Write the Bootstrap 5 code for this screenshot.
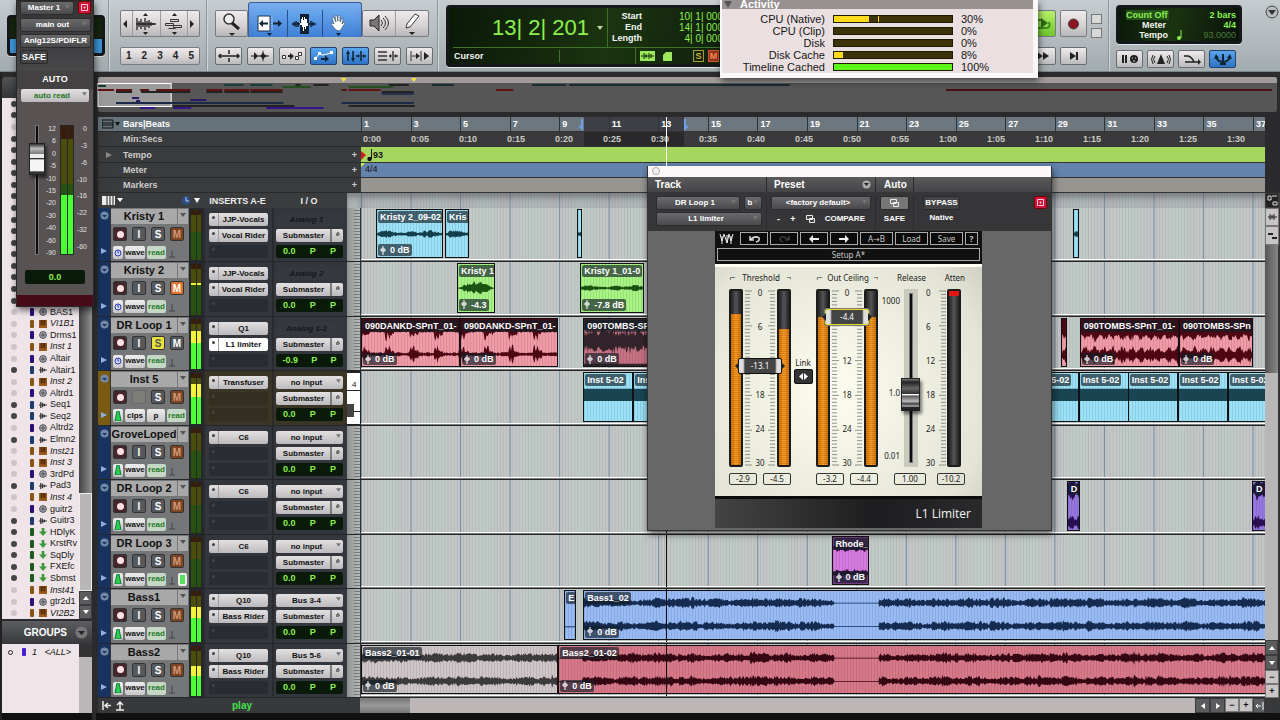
<!DOCTYPE html>
<html lang="en">
<head>
<meta charset="utf-8">
<meta name="viewport" content="width=device-width, initial-scale=1">
<title>Edit: Session</title>
<link href="https://cdn.jsdelivr.net/npm/bootstrap@5.3.0/dist/css/bootstrap.min.css" rel="stylesheet">
<style>
:root{--ui:"Liberation Sans",Arial,sans-serif;--plug:"Noto Sans","DejaVu Sans",sans-serif;--lcd:#8df04e;--arrow:url("data:image/svg+xml,%3Csvg xmlns='http://www.w3.org/2000/svg' viewBox='0 0 6 4'%3E%3Cpath d='M0 0h6L3 4z' fill='%23777'/%3E%3C/svg%3E")}
*{box-sizing:border-box}
body{font:9px/12px var(--ui);background:#2b2b2d;color:#ddd;height:100vh;min-height:600px;overflow:hidden;position:relative}
button,select,input,output{font-family:var(--ui)}
button{padding:0;border:0;line-height:1}
svg{display:block}
/* toolbar */
.toolbar-top{height:72px;background:linear-gradient(#c6ccd0,#b4bcc0 50%,#a2abae);border-bottom:1px solid #7d8588}
.tb-sec{border-right:1px solid #8b9497;box-shadow:1px 0 #d2d8da;padding:10px 11px 0}
.tool-strip{border:1px solid #777c80;border-radius:2px;background:linear-gradient(#efeaec,#d5d0d2 60%,#b7b6b9);height:27px}
.tool-strip>button{background:none;border-right:1px solid #9a9c9f;flex:1}
.tool-strip>button:last-child{border:0}
.tool-strip>.on{background:linear-gradient(#69a7ee,#3f7fd6);border-color:#264f8c}
.num-strip,.mini-strip{margin-top:10px}
.num-strip{height:18px}
.num-strip>button{font-size:10px;font-weight:bold;color:#222;border:0}
.tool-row{height:27px}
.smart{background:linear-gradient(#79aeef,#3f7cd0);border:1px solid #3b5e92;border-bottom:0;border-radius:3px 3px 0 0;margin-top:-8px;padding:7px 5px 0;width:115px;height:35px}
.mini{width:27px;height:18px;border:1px solid #686d70;border-radius:2px;background:linear-gradient(#eeeaeb,#bcbbbe);display:grid;place-items:center}
.mini.on{background:linear-gradient(#58a5ee,#2f73c4);border-color:#21416e}
.lcd{background:linear-gradient(100deg,#0b1808,#1b3410 45%,#08120a);border:3px solid #15171a;border-radius:4px;box-shadow:0 1px #dfe5e8;color:var(--lcd)}
.counter-main{font-size:22px;line-height:24px;color:var(--lcd)}
.gline{border-color:#3e7427!important}
.white{color:#f2f5f2}
/* universe */
.universe{margin:5px 3px 0 2px;height:35px;background:#565656;border-top:6px solid #a09b99;border-radius:2px;position:relative}
.universe svg{width:100%;height:29px;overflow:visible}
/* sidebar */
.side{width:92px;border-left:2px solid #222;padding-top:5px}
.list-head{height:21px;background:linear-gradient(#505254,#343638);border-radius:4px 4px 0 0}
.trk-list{background:#efe5e8;width:77px;min-height:0;overflow:hidden}
.trk-list li{flex:1;min-height:0;display:flex;align-items:center;font-size:9px;line-height:11px;white-space:nowrap;color:#151515}
.dot{width:6px;height:6px;border-radius:50%;background:#444;margin-left:9px;margin-right:13px;flex:none}
.dot.off{background:#cfc5c9}
.chip{width:4px;height:8px;border-radius:1px;margin-right:6px;flex:none}
.trk-list .chip{margin-right:5px}
.li-ic{width:8px;height:8px;margin-right:3px;flex:none}
.sbar{width:13px;background:linear-gradient(90deg,#444,#909090)}
.sbar i{display:block;background:#b9b6b7;border:1px solid #eee}
.sbar button,.nav-btn{background:#5b5c5e;color:#fff;border:1px solid #3c3c3e;display:grid;place-items:center}
.groups-head{height:23px;background:linear-gradient(#5b5d60,#36383b);color:#fff;font:bold 10px/12px var(--ui);margin-top:2px}
.groups-list{height:69px;background:#efe5e8;color:#111}
/* rulers */
.rulers{height:76px;margin-top:5px;margin-left:2px}
.ruler-labels{width:263px;background:#3a3b3c}
.ruler-labels>div{flex:1;border-bottom:1px solid #292a2b;display:flex;align-items:center;font-weight:bold;color:#ccc;padding-left:25px}
.ruler-labels>div:first-child{background:#67737b;color:#fff;padding-left:0}
.ruler-row{flex:1;position:relative;overflow:hidden;border-bottom:1px solid #333}
.ruler-row span{position:absolute;top:0;line-height:15px;font-weight:bold;white-space:nowrap}
.bars-row{background:linear-gradient(90deg,#6c777f 24.7%,#3d4046 24.7% 35.7%,#6c777f 35.7%)}
.bars-row span{border-left:1px solid #2e3338;padding-left:2px;color:#fff}
.secs-row{background:linear-gradient(90deg,#3a3a3c 24.7%,#29292b 24.7% 35.7%,#3a3a3c 35.7%)}
.secs-row span{color:#c9c9c9;padding-left:2px}
.ruler-area{position:relative}
.ruler-area::after{content:"";position:absolute;left:33.7%;top:0;height:100%;width:1px;background:#fff}
/* tracks */
.edit-head{height:15px;margin-left:2px;background:#3a3c3e;color:#eee;font-weight:bold}
.gut{background-color:#aeb3b5;box-shadow:inset 0 5px 5px rgba(60,65,70,.4)}
.grid-bg{background-image:linear-gradient(90deg,#6f90a3 1px,transparent 1px),linear-gradient(90deg,rgba(130,130,150,.25) 1px,transparent 1px),linear-gradient(90deg,rgba(195,165,190,.14),rgba(175,215,195,.16) 50%,rgba(195,165,190,.14));background-size:calc(100%/18.25) 100%,calc(100%/292) 100%,calc(100%/18.25) 100%}
.tracks{flex:1;min-width:0;min-height:486px;margin-left:2px}
.trk{flex:1;min-height:54px;background:#33363c;border-bottom:1px solid #24262a}
.trk.amber{background:#3a3525}
.strip{width:12px;background:#17335f;padding:3px 0}
.amber .strip{background:#7a5a10}
.panel{width:79px;background:#747678;border-left:1px solid #333;padding:1px 1px 0 0}
.nm{height:15px;background:#a9a9a9;color:#111;font:bold 11px/15px var(--ui);text-align:center;white-space:nowrap}
.nm span{border-right:1px solid #777;width:67px}
.row-b{padding:3px 4px 0 2px;display:flex;justify-content:space-between}
.sq{width:14px;height:14px;border-radius:2px;font:bold 10px/13px var(--ui);background:#55585c;color:#fff;border:1px solid #333;text-align:center}
.sq.rec{background:#44272c;display:grid;place-items:center}
.sq.rec::after{content:"";width:7px;height:7px;border-radius:50%;background:#ffe1e4}
.sq.mute{background:#7d4423;color:#d19a7c}
.sq.mute-on{background:#e07432}
.sq.solo-on{background:#e8e23c;color:#555}
.sq.none{background:#7d7d78;border-color:#6a6a68}
.row-c{padding:5px 0 0 2px;gap:2px;display:flex}
.tiny{height:13px;border-radius:2px;background:linear-gradient(#eee,#c6c6c8);color:#111;font:bold 8px/12px var(--ui);text-align:center}
.tiny.rd{background:#c5d8c5;color:#267a26;width:19px}
.meter{width:14px;padding:2px 2px 1px;gap:1px;background:#24282a;display:flex}
.meter i{flex:1;background:linear-gradient(#381d0b 10%,#4d4d0b 10% 45%,#28520f 45%);display:flex;align-items:flex-end}
.meter b{display:block;width:100%;background:#4aff34}
.ins{width:69px;padding:5px 4px 0 4px;border-left:2px solid #292b2f}
.slot{height:13px;margin-bottom:3px;background:#292c32;border-radius:2px;display:flex;width:100%;font:bold 8px/13px var(--ui);color:#111}
.amber .slot.empty{background:#332e1f}
.slot::before{content:"";width:3px;height:3px;border-radius:50%;background:#444;margin:3px 3px 0 3px}
.slot.full{background:linear-gradient(#e3e0e1,#bcbabd)}
.slot.full.lit{background:#fff}
.slot span{flex:1;border-left:1px solid #9d9b9e;text-align:center;white-space:nowrap}
.slot.empty span{border:0}
.io{width:75px;padding:5px 4px 0 2px;border-left:2px solid #292b2f}
.form-select.dd{height:13px;min-height:0;padding:0 8px 0 2px;margin:0 0 3px;border:0;border-radius:2px;background:var(--arrow) right 2px top 3px/5px 4px no-repeat,linear-gradient(#e3e0e1,#bcbabd);font:bold 8px/13px var(--ui);color:#111;text-align:center;text-align-last:center;box-shadow:none}
.form-select.dd.off{background:#35393f;color:#15171a;font-style:italic}
.form-select.dd.dark{background:var(--arrow) right 3px top 3px/5px 4px no-repeat,linear-gradient(#6a6a6c,#4a4a4c);color:#fff;border:1px solid #2c2c2e;height:14px;line-height:12px;margin-bottom:2px}
.form-select.dd.subm{background:linear-gradient(90deg,transparent 80%,rgba(90,90,90,.7) 80% 83%,transparent 83%),radial-gradient(circle 2px at 92% 40%,#777 99%,transparent),linear-gradient(#e3e0e1,#bcbabd);padding-right:14px}
.vol{height:13px;background:#0a1a0a;border-radius:2px;color:var(--lcd);font:bold 9px/13px var(--ui);display:flex;justify-content:space-around}
.vruler{width:14px;background:repeating-linear-gradient(transparent 0 2px,#77797a 2px 3px) right/6px 100% no-repeat,linear-gradient(90deg,#8f9192,#b9bbba);border-right:1px solid #333}
.keys{width:14px;background:#fff;color:#111;position:relative;border:solid #222;border-width:2px 1px 1px 0;padding:7px 0 0 5px;font:8px/10px var(--ui)}
.keys::after{content:"";position:absolute;left:0;top:31px;width:7px;height:13px;background:#444}
.keys::before{content:"";position:absolute;left:0;top:17px;width:100%;height:22px;border:solid #222;border-width:1px 0}
.lane{flex:1;min-width:0;position:relative;overflow:hidden;background-color:#c4cac7;border-bottom:1px solid #7a7d7c;box-shadow:inset 0 -1px #fff}
.lane::after{content:"";position:absolute;left:33.7%;top:0;bottom:0;width:1px;background:#111}
.clip{position:absolute;top:1px;bottom:2px;border:1px solid #111;overflow:hidden}
.clip>svg{position:absolute;left:0;top:0;width:100%;height:100%}
.clip-nm,.clip-db{position:absolute;left:1px;font:bold 9px/12px var(--ui);color:#fff;background:rgba(20,30,40,.66);border-radius:2px;padding:0 2px;white-space:nowrap}
.clip-nm{top:1px}.clip-db{bottom:1px;padding-left:1px}
.clip::before{content:"";position:absolute;inset:0;background:repeating-linear-gradient(90deg,rgba(0,0,0,.09) 0 1px,transparent 1px 3px)}
.vscroll{width:15px;background:#b9b6b7;border-right:2px solid #333}
.footbar{height:15px;margin-left:2px;background:#38393b}
.hscroll{flex:1;background:#bcb6b7}
.pm{width:14px;height:14px;display:grid;place-items:center;background:#c9c5c7;color:#111;border:1px solid #777}
/* floating windows */
.win{position:absolute;box-shadow:1px 3px 7px rgba(0,0,0,.6)}
.master{left:16px;top:0;width:78px;height:307px;background:#585253;border:1px solid #29292b}
.master-top{background:linear-gradient(#333,#47474a);padding:0 2px 0 3px;height:70px}
.dark-btn{background:#434345;border:1px solid #29292b;border-radius:2px;color:#fff;font:bold 9px/12px var(--ui);padding:0 1px}
.target{width:13px;height:13px;background:#d1153a;border:1px solid #700;border-radius:2px;display:grid;place-items:center}
.vslide{position:relative;flex:none}
.vslide input{appearance:none;-webkit-appearance:none;position:absolute;left:50%;top:50%;transform:translate(-50%,-50%) rotate(-90deg);background:none;margin:0}
.vslide input::-webkit-slider-runnable-track{height:4px;background:#0d0d0f;border:1px solid #777;box-sizing:border-box}
.vslide input::-webkit-slider-thumb{-webkit-appearance:none;margin-top:-7px;border:1px solid #222;box-shadow:-3px 2px 3px rgba(0,0,0,.5)}
.v-master{width:16px;height:130px}.v-master input{width:130px;height:16px}
.v-master input::-webkit-slider-thumb{width:32px;height:16px;background:linear-gradient(90deg,#333 8%,#f5f5f5 9% 48%,#333 49% 53%,#eee 54% 65%,#777 66%,#bbb 85%,#333)}
.v-rel{width:14px;height:178px;background:#c9c9bd}.v-rel input{width:170px;height:20px}
.v-rel input::-webkit-slider-thumb{width:33px;height:19px;margin-top:-9px;background:linear-gradient(90deg,#222 8%,#aaa 12%,#444 20%,#bbb 28%,#555 46%,#fff 48% 51%,#333 53%,#666 70%,#222 90%,#777)}
.sc{font:7px/8px var(--ui);color:#e3e0e0;text-align:right;display:flex;flex-direction:column;justify-content:space-between}
.activity{left:720px;top:0;width:318px;height:78px;background:#ebe0e1;border:solid #fbf6f7;border-width:0 5px 5px 2px;color:#151515}
.act-head{height:9px;background:#989192;color:#fff;font:bold 11px/9px var(--ui);padding-left:2px}
.act-rows{height:60px;padding-top:4px;font-size:11px}
.act-rows>div{flex:1}
.act-rows .progress{width:120px;height:8px;border:1px solid #1f1a05;border-radius:0;background:#3d330b}
.plugin{left:647px;top:166px;width:405px;height:365px;background:#676767;border:1px solid #333;border-top:0}
.plug-title{height:11px;background:#fcf8fa;padding:1px 4px}
.plug-title button{width:8px;height:8px;border:1px solid #aaa;border-radius:50%;background:#f4f0f2;display:block}
.plug-head{height:15px;background:linear-gradient(#5b5b5d,#444446);color:#fff;font:bold 10px/15px var(--ui)}
.plug-ctl{height:39px;background:#363638;padding:4px 0 0;color:#fff}
.plug-ctl>div,.plug-head>div{border-right:1px solid #2b2b2d}
.flat{background:none;color:#fff;font:bold 9px/12px var(--ui);height:13px;padding:0 2px}
.l1{width:267px;margin-left:67px;background:#111;color:#222}
.l1-bar{height:16px;padding:1px;gap:2px}
.l1-bar button{border:1px solid #aaa;background:#0b0b0b;color:#c8c8c8;font:8px/10px var(--plug);height:13px;display:grid;place-items:center;padding:0}
.l1-setup{height:13px;margin:1px 2px 3px;border:1px solid #aaa;color:#c8c8c8;font:8px/11px var(--plug);text-align:center}
.l1-face{height:232px;background:radial-gradient(circle at 45% 55%,#fdfdf0,#e3e4d5 80%,#d0d0c4);border-top:3px solid #fffff5;padding:4px 0 0 14px;font:8px/12px var(--plug)}
.grp{width:62px;margin-right:2px}
.grp-t{height:18px;line-height:13px;text-align:center;white-space:nowrap}
.lv{width:14px;height:178px;background:linear-gradient(90deg,#222,#555 50%,#222);border:2px solid #1c1c1c;border-radius:2px;display:flex;align-items:flex-end}
.lv i{display:block;width:100%;background:repeating-linear-gradient(rgba(120,60,0,.25) 0 1px,transparent 1px 2px),linear-gradient(90deg,#d27408,#ff9f27 50%,#d27408)}
.scale{flex:1;position:relative;height:178px}
.scale svg{position:absolute;inset:0;width:100%;height:100%}
.nums{height:178px;display:flex;flex-direction:column;justify-content:space-between;text-align:center;line-height:8px}
.ro-row{margin-top:6px}
.ro{border:1px solid #333;border-radius:2px;height:12px;line-height:10px;text-align:center;width:28px;display:block;font-family:var(--plug)}
.grip{position:absolute;left:9px;width:44px;height:16px;border:1px solid #111;border-radius:2px;background:linear-gradient(90deg,#ddd 10%,#444 14% 86%,#ddd 90%);color:#fff;text-align:center;font:8px/13px var(--plug)}
.grip::before,.grip::after{content:"";position:absolute;top:3px;border:4px solid transparent}
.grip::before{left:-8px;border-right-color:#222}.grip::after{right:-8px;border-left-color:#222}
.grip.sel{border:1px solid #e4dc1d;box-shadow:0 0 0 1px #777}
.grp .hid{position:absolute;opacity:0;left:9px;top:0;width:44px;height:100%}
.l1-foot{height:32px;background:linear-gradient(90deg,#444,#1d1d1f 60%,#2a2a2c);border-top:3px solid #0c0c0c;color:#f4f4f4;font:500 12px/30px "Open Sans",var(--plug);text-align:right;padding-right:11px}
</style>
</head>
<body class="d-flex flex-column">

<header class="toolbar-top d-flex flex-shrink-0">
  <div class="tb-sec flex-shrink-0" style="width:109px;padding:15px 3px 0 7px"><div class="lcd" style="height:41px;background:linear-gradient(#14240f 60%,#3c93d8 60%)"></div></div>
  <div class="tb-sec flex-shrink-0" style="width:98px;padding-right:6px">
    <div class="tool-strip d-flex">
      <button aria-label="Zoom out"><svg width="8" height="12" viewBox="0 0 8 12"><path d="M6 2v8L2 6z" fill="#222"/></svg></button>
      <button aria-label="Audio zoom" style="flex:2.4"><svg width="26" height="24" viewBox="0 0 26 24"><path d="M10 4h5l-2.500-3zM10 20h5l-2.500 3z" fill="#222"/><path d="M4 6v12M6 9v6M8 7v10M10 10v5M12 6v12M14 9v6M16 8v8M18 10v4M20 11v2M3 12h20" stroke="#222" stroke-width="1.300"/></svg></button>
      <button aria-label="MIDI zoom" style="flex:2.4"><svg width="26" height="24" viewBox="0 0 26 24"><path d="M11 4h5l-2.500-3zM11 20h5l-2.500 3z" fill="#222"/><path d="M9.500 7.500h8v2h-8zM4.500 11.500h8v2h-8zM12.500 13.500h8v2h-8zM7.500 16.500h7" fill="none" stroke="#333"/></svg></button>
      <button aria-label="Zoom in"><svg width="8" height="12" viewBox="0 0 8 12"><path d="M2 2v8l4-4z" fill="#222"/></svg></button>
    </div>
    <div class="tool-strip num-strip d-flex"><button>1</button><button>2</button><button>3</button><button>4</button><button>5</button></div>
  </div>
  <div class="tb-sec flex-shrink-0" style="width:231px;padding-left:8px;padding-right:8px">
    <div class="tool-row d-flex">
      <div class="tool-strip d-flex" style="width:33px"><button aria-label="Zoomer"><svg width="30" height="25" viewBox="0 0 30 25"><circle cx="13" cy="8" r="5" fill="#eee" stroke="#333" stroke-width="1.500"/><path d="m16 12 7 6" stroke="#222" stroke-width="3"/><path d="M13 22h6l-3 3z" fill="#222"/></svg></button></div>
      <div class="smart"><div class="d-flex tool-strip bg-transparent border-0">
        <button class="on" aria-label="Trim"><svg width="32" height="27" viewBox="0 0 32 27"><path d="M4 6h12v15H4z" fill="#fff" stroke="#234"/><path d="M18 7v13" stroke="#ddf" stroke-dasharray="1 1"/><path d="M7 13.500h7M19 13.500h7" stroke="#123" stroke-width="2"/><path d="m9 10-4 3.500L9 17zM24 10l4 3.500-4 3.500zM13 23h5l-2.500 3z" fill="#123"/></svg></button>
        <button class="on" aria-label="Selector"><svg width="32" height="27" viewBox="0 0 32 27"><path d="M12 4h9v20h-9z" fill="#123"/><path d="M4 14h24M6 12v4M8 11v6M10 12v5M23 11v6M25 12v4" stroke="#123" stroke-width="1.500"/><path d="M12 13h1V9h1V7h1v3h1V7h1v2h2v4h1v3h-2v3h-1v-2h-1v4h-1v-4h-1v-2h-2z" fill="#fff"/></svg></button>
        <button class="on" aria-label="Grabber"><svg width="32" height="27" viewBox="0 0 32 27"><path d="m13 20-5-6q0-2 3 0L9 8q1-2 2 0l2 4-1-6q1-2 2 0l1 5V6q1-2 2 0v6l2-4q2-1 1 1l-1 5 2-2q2 0 1 1l-5 8z" fill="#fff" stroke="#345" stroke-width=".6"/><path d="M13 23h5l-2.500 3z" fill="#123"/></svg></button>
      </div></div>
      <div class="tool-strip d-flex" style="width:67px">
        <button aria-label="Scrubber"><svg width="32" height="25" viewBox="0 0 32 25"><path d="M7 9h4l5-5v16l-5-5H7z" fill="#777" stroke="#222"/><path d="M18 9q3 3 0 6M20 7q5 5 0 10M22 5q7 7 0 14" fill="none" stroke="#333"/></svg></button>
        <button aria-label="Pencil"><svg width="32" height="25" viewBox="0 0 32 25"><path d="m10 17 1-4 8-10 4 2-9 11z" fill="#fff" stroke="#333"/><path d="M13 21h6l-3 3z" fill="#222"/></svg></button>
      </div>
    </div>
    <div class="mini-strip d-flex justify-content-between" style="margin-right:-4px">
      <button class="mini" aria-label="Zoom toggle"><svg width="24" height="14" viewBox="0 0 24 14"><path d="M2 7h8M14 7h8M4 5 2 7l2 2M20 5l2 2-2 2M12 1v4M12 9v4M9 7h6" fill="none" stroke="#222" stroke-width="1.500"/></svg></button>
      <button class="mini" aria-label="Tab to transient"><svg width="24" height="14" viewBox="0 0 24 14"><path d="M3 7h18" stroke="#222"/><path d="m6 3 4 4-4 4zM15 1l1 4 3 2-3 2-1 4-1-4-2-2 2-2z" fill="#222"/></svg></button>
      <button class="mini" aria-label="Mirrored MIDI"><svg width="24" height="14" viewBox="0 0 24 14"><path d="M2.500 6.500h3v3h-3zM15.500 7.500h3v3h-3zM18.500 3.500h3v3h-3z" fill="#fff" stroke="#333"/><path d="M8 6h2V4l4 3-4 4V8H8z" fill="#222"/></svg></button>
      <button class="mini on" aria-label="Automation follows edit"><svg width="24" height="14" viewBox="0 0 24 14"><path d="m3 10 4-5 4 1 8-2" fill="none" stroke="#fff"/><path d="M2 8h3v3H2zM6 3h3v3H6zM18 2h3v3h-3z" fill="#fff"/><path d="M9 9h4V6l4 4-4 3v-2H9z" fill="#123"/></svg></button>
      <button class="mini on" aria-label="Link track"><svg width="24" height="14" viewBox="0 0 24 14"><path d="M4 12V3M9 2v9M17 2v10M12 7h3M19 7h3" stroke="#123" stroke-width="1.500"/><path d="m2 5 2-4 2 4zM7 9l2 4 2-4zM14 5l2 2-2 2zM20 5l-2 2 2 2z" fill="#123"/></svg></button>
      <button class="mini" aria-label="Insertion"><svg width="24" height="14" viewBox="0 0 24 14"><path d="M2 3h9M2 7h9M2 11h9M17 2v10M13 7h2M19 7h3" stroke="#333" stroke-width="1.400"/><path d="m14 5 2 2-2 2zM20 5l-2 2 2 2z" fill="#222"/></svg></button>
      <button class="mini" aria-label="Layered"><svg width="24" height="14" viewBox="0 0 24 14"><path d="M4 2v10M14 2v10M5 7h5" stroke="#333"/><path d="m9 4 4 3-4 3zM17 3v8l5-4z" fill="#222"/></svg></button>
    </div>
  </div>
  <div class="lcd flex-shrink-0 ms-2 px-1 d-flex flex-column" style="width:360px;height:62px;margin-top:5px">
    <div class="d-flex flex-grow-1">
      <div class="counter-main d-flex align-items-center justify-content-end" style="width:150px"><span class="text-nowrap">13| 2| 201</span><svg class="ms-2" width="6" height="4" viewBox="0 0 6 4"><path d="M0 0h6L3 4z" fill="#b6dea0"/></svg></div>
      <div class="gline border-start ms-1 d-flex" style="padding-top:3px">
        <div class="white text-end fw-bold" style="width:34px;font-size:9px;line-height:11px">Start<br>End<br>Length</div>
        <div class="text-end text-nowrap" style="width:81px;font-size:10px;line-height:11px">10| 1| 000<br>14| 1| 000<br>4| 0| 000</div>
      </div>
    </div>
    <div class="d-flex border-top align-items-center gline" style="height:17px">
      <b class="white" style="width:106px;padding-left:1px">Cursor</b><span class="border-start gline" style="width:76px;height:12px"></span>
      <span class="border-start gline ps-1 d-flex align-items-center gap-1" style="height:16px"><svg width="15" height="10" viewBox="0 0 15 10"><path fill="#9be85c" d="M0 0h15v10H0z"/><path d="M1 5h13M4 2v6M6 3v4M9 2v6M11 3v4" stroke="#152b0b"/></svg><svg class="ms-1" width="9" height="9" viewBox="0 0 9 9"><path d="M3 0h6v9H0V3z" fill="#9be85c"/></svg></span>
      <b class="text-center" style="width:11px;line-height:10px;border:1px solid #a89a3a;color:#c5b340;margin-left:21px">S</b><b class="text-center ms-1" style="width:11px;line-height:10px;background:#92341a;border:1px solid #d4572a;color:#f48c58">M</b>
    </div>
  </div>
  <div class="tb-sec ms-auto d-flex gap-1 flex-shrink-0" style="width:84px;padding:10px 5px 0 0">
    <div style="width:31px"><div class="tool-strip" style="background:linear-gradient(#b8f16c,#6fc52c)"><button class="w-100" aria-label="Loop playback"><svg class="ms-2" width="20" height="24" viewBox="0 0 20 24"><path d="M3 17h10q4-1 2-6M3 9h5" stroke="#3c8a1c" fill="none" stroke-width="2"/><path d="m7 7 7 5-7 5z" fill="#2e6d18"/></svg></button></div><button class="mini mini-strip w-100" aria-label="Fast forward"><svg class="ms-1" width="12" height="10" viewBox="0 0 12 10"><path d="m0 1 6 4-6 4zM6 1l6 4-6 4z" fill="#222"/></svg></button></div>
    <div style="width:27px"><div class="tool-strip"><button class="w-100" aria-label="Record"><svg width="25" height="25" viewBox="0 0 25 25"><circle cx="12.500" cy="13" r="5" fill="#8d1522" stroke="#444"/></svg></button></div><button class="mini mini-strip" aria-label="Go to end"><svg width="12" height="10" viewBox="0 0 12 10"><path d="m2 1 6 4-6 4zM8 1h2v8H8z" fill="#222"/></svg></button></div>
    <div class="pt-1"><div class="mb-1" style="width:11px;height:10px;background:#d8dada;border:1px solid #777"></div><div style="width:11px;height:10px;background:#d8dada;border:1px solid #777"></div></div>
  </div>
  <div class="flex-shrink-0 d-flex" style="width:171px;padding:5px 0 0 7px">
    <div style="width:126px">
      <div class="lcd" style="height:39px;padding:2px 3px 0 7px;font:bold 9px/10px var(--ui)">
        <div class="d-flex justify-content-between"><span style="background:#24501a;width:43px">Count Off</span><span>2 bars</span></div>
        <div class="d-flex justify-content-between"><span class="white text-end" style="width:40px">Meter</span><span>4/4</span></div>
        <div class="d-flex"><span class="white text-end" style="width:42px">Tempo</span><svg class="ms-2" width="6" height="10" viewBox="0 0 6 10"><path d="M5 0v8" stroke="#8df04e"/><circle cx="3" cy="8" r="2" fill="#8df04e"/></svg><span class="ms-auto fw-normal" style="color:#4a7a3a">93.0000</span></div>
      </div>
      <div class="d-flex" style="gap:4px;margin-top:6px">
        <button class="mini" aria-label="Wait for note"><svg width="20" height="12" viewBox="0 0 20 12"><path d="M3 2v8M6 2v8" stroke="#222" stroke-width="2"/><circle cx="14" cy="6" r="4" fill="#222"/><path d="M12 5h1M15 5h1M13 8h2" stroke="#ddd"/></svg></button>
        <button class="mini" aria-label="Metronome"><svg width="22" height="13" viewBox="0 0 22 13"><path d="m11 1 4 10H7z" fill="#222"/><path d="M5 3q-3 3 0 7M3 2q-3 4 0 9M17 3q3 3 0 7M19 2q3 4 0 9" fill="none" stroke="#222"/></svg></button>
        <button class="mini" aria-label="Count off"><svg width="20" height="12" viewBox="0 0 20 12"><path d="M2 3h4q4 1 6 6H3M12 9h5" fill="none" stroke="#222" stroke-width="1.500"/><path d="m16 6 3 3-3 3z" fill="#222"/></svg></button>
        <button class="mini on" aria-label="Tempo ruler"><svg width="18" height="14" viewBox="0 0 18 14"><path d="M9 2v11M2 5q2 5 7 5t7-5M6 12h6" fill="none" stroke="#123" stroke-width="2"/><path d="m0 7 2-5 3 4zM18 7l-2-5-3 4z" fill="#123"/></svg></button>
      </div>
    </div>
    <button class="ms-auto bg-transparent align-self-start" aria-label="Toolbar menu"><svg width="17" height="15" viewBox="0 0 17 15"><circle cx="9" cy="7" r="6" fill="#b8bec0" stroke="#444"/><path d="M5 5h8l-4 5z" fill="#333"/></svg></button>
  </div>
</header>

<div class="d-flex flex-grow-1" style="min-height:0">
  <aside class="side d-flex flex-column flex-shrink-0">
    <div class="list-head"></div>
    <div class="d-flex flex-grow-1" style="min-height:0">
      <ul class="trk-list list-unstyled m-0 d-flex flex-column" id="trackList"></ul>
      <div class="sbar d-flex flex-column"><i class="mt-auto" style="height:98px"></i><button style="height:14px" aria-label="Scroll up"><svg width="6" height="4" viewBox="0 0 6 4"><path d="M0 4h6L3 0z" fill="#fff"/></svg></button><button style="height:14px" aria-label="Scroll down"><svg width="6" height="4" viewBox="0 0 6 4"><path d="M0 0h6L3 4z" fill="#fff"/></svg></button></div>
    </div>
    <div class="groups-head d-flex align-items-center"><span class="ms-auto">GROUPS</span><svg class="ms-2 me-1" width="13" height="13" viewBox="0 0 13 13"><circle cx="6.500" cy="6.500" r="6" fill="#777"/><path d="M3 5h7L6.500 9z" fill="#222"/></svg></div>
    <div class="groups-list d-flex align-items-start"><span class="d-flex pt-1 ps-2 flex-grow-1 align-items-center fst-italic" style="line-height:8px"><i style="width:5px;height:5px;border:1px solid #222;border-radius:50%;margin:0 9px 0 -2px"></i><i class="chip" style="background:#4b1fd8">&nbsp;</i>1<span class="ms-auto me-2">&lt;ALL&gt;</span></span><span class="d-block h-100" style="width:13px;background:linear-gradient(#333 13px,#bbb6b8 13px)"></span></div>
    <div style="height:7px;background:#111"></div>
  </aside>

  <main class="d-flex flex-column flex-grow-1 ps-1" style="min-width:0">
    <div class="universe"><svg viewBox="0 0 1176 29" preserveAspectRatio="none" id="universe"></svg></div>
    <div class="rulers d-flex">
      <div class="ruler-labels d-flex flex-column flex-shrink-0">
        <div><svg class="ms-1" style="margin-right:3px" width="18" height="10" viewBox="0 0 18 10"><path d="M0 1h11v8H0zM0 4h11M0 6h11" fill="none" stroke="#111"/><path d="M13 3h5l-2.500 4z" fill="#111"/></svg>Bars|Beats</div>
        <div>Min:Secs</div>
        <div style="padding-left:8px"><svg style="margin-right:11px" width="6" height="6" viewBox="0 0 6 6"><path d="M0 0v6l6-3z" fill="#888"/></svg>Tempo<span class="ms-auto me-1">+</span></div>
        <div>Meter<span class="ms-auto me-1">+</span></div>
        <div>Markers<span class="ms-auto me-1">+</span></div>
      </div>
      <div class="ruler-area flex-grow-1 d-flex flex-column" style="min-width:0;margin-right:15px">
        <div class="ruler-row bars-row" id="bars"></div>
        <div class="ruler-row secs-row" id="secs"></div>
        <div class="ruler-row d-flex align-items-center fw-bold" style="background:#a5d660;color:#151515"><svg width="12" height="14" viewBox="0 0 12 14"><path d="M0 3l5 4-5 5z" fill="#d31b1b"/><path d="M10.500 1v10" stroke="#111"/><circle cx="8.500" cy="11" r="2.200" fill="#111"/></svg>93</div>
        <div class="ruler-row d-flex" style="background:#6484ad;color:#111;line-height:13px"><svg width="4" height="4" viewBox="0 0 4 4"><path d="M0 0h4L0 4z" fill="#d8f04a"/></svg>4/4</div>
        <div class="ruler-row" style="background:#979590"></div>
      </div>
    </div>
    <div class="edit-head d-flex align-items-center">
      <span class="d-flex align-items-center flex-shrink-0 ps-1" style="width:106px"><svg width="22" height="9" viewBox="0 0 22 9"><path fill="#eee" d="M0 0h13v9H0z"/><path d="M5 0v9M8 0v9M11 0v9" stroke="#222"/><path d="M15 2h6l-3 4z" fill="#fff"/></svg><svg class="ms-auto me-1" width="20" height="11" viewBox="0 0 20 11"><circle cx="6" cy="5.500" r="4.500" fill="#2d4c82"/><path d="M6 2v4h3" stroke="#bcd" fill="none"/><path d="M14 3h6l-3 5z" fill="#fff"/></svg></span>
      <span class="text-center flex-shrink-0" style="width:67px">INSERTS A-E</span><span class="text-center flex-shrink-0" style="width:76px">I / O</span>
      <span class="gut h-100 flex-shrink-0" style="width:14px"></span>
      <div class="gut grid-bg h-100 flex-grow-1"></div>
      <svg class="flex-shrink-0" width="15" height="13" viewBox="0 0 15 13"><path fill="#222" d="M1 0h12v13H1z"/><path d="M3 2h3v4H3zM8 8h4v3H8zM7 2h5" fill="none" stroke="#ddd"/></svg>
    </div>
    <div class="d-flex flex-grow-1" style="min-height:0">
      <div class="tracks d-flex flex-column" id="tracks"></div>
      <div class="vscroll d-flex flex-column">
        <button class="pm" style="height:18px" aria-label="Wave zoom"><svg width="9" height="8" viewBox="0 0 9 8"><path d="M0 4h9M2 1v6M4 2v4M6 1v6" stroke="#222"/></svg></button><button class="pm" style="height:19px" aria-label="MIDI zoom"><svg width="9" height="8" viewBox="0 0 9 8"><path d="M0 2h5M4 6h5" stroke="#222" stroke-width="2"/></svg></button>
        <i class="d-block" style="height:128px;background:linear-gradient(90deg,#555,#888)"></i>
        <button class="nav-btn mt-auto" style="height:15px" aria-label="Up"><svg width="6" height="4" viewBox="0 0 6 4"><path d="M0 4h6L3 0z" fill="#fff"/></svg></button><button class="nav-btn" style="height:15px" aria-label="Down"><svg width="6" height="4" viewBox="0 0 6 4"><path d="M0 0h6L3 4z" fill="#fff"/></svg></button>
        <button class="pm fw-bold" aria-label="Shrink tracks">−</button><button class="pm fw-bold" aria-label="Enlarge tracks">+</button>
      </div>
    </div>
    <div class="footbar d-flex">
      <div class="d-flex align-items-center ps-1 flex-shrink-0" style="width:262px"><svg width="26" height="11" viewBox="0 0 26 11"><path d="M1 1v9M3 5.500h6M6 3 3 5.500 6 8M18 10V2M15 5l3-3 3 3M14 10h8" fill="none" stroke="#eee" stroke-width="1.500"/></svg><b style="color:#45e04a;font-size:10px;margin-left:104px">play</b></div>
      <div class="hscroll"><div class="h-100" style="width:50px;background:linear-gradient(#777,#999 50%,#777)"></div></div>
      <button class="nav-btn" style="width:15px" aria-label="Left"><svg width="4" height="6" viewBox="0 0 4 6"><path d="M4 0v6L0 3z" fill="#fff"/></svg></button><button class="nav-btn" style="width:15px" aria-label="Right"><svg width="4" height="6" viewBox="0 0 4 6"><path d="M0 0v6l4-3z" fill="#fff"/></svg></button><button class="pm fw-bold" aria-label="Zoom out">−</button><button class="pm fw-bold" aria-label="Zoom in">+</button><button class="nav-btn" style="width:12px;margin-right:15px" aria-label="To end"><svg width="9" height="8" viewBox="0 0 9 8"><path d="M8 0v8M6 4H1M3 2 1 4l2 2" fill="none" stroke="#fff"/></svg></button>
    </div>
    <div style="height:7px;background:#111"></div>
  </main>
</div>

<section class="win activity" aria-label="System usage">
  <div class="act-head d-flex align-items-center"><svg class="me-2" width="8" height="7" viewBox="0 0 8 7"><path d="M0 0h8L4 7z" fill="#555"/></svg>Activity</div>
  <div class="act-rows d-flex flex-column" id="activity"></div>
</section>

<section class="win master d-flex flex-column" aria-label="Master fader">
  <div class="master-top">
    <div class="d-flex gap-1" style="margin-bottom:3px"><select class="form-select dd dark m-0" aria-label="Track"><option>Master 1</option></select><button class="target flex-shrink-0" aria-label="Target"><svg width="7" height="7" viewBox="0 0 7 7"><path d="M.5.500h6v6h-6zM3 3h1v1H3z" fill="none" stroke="#fcd"/></svg></button></div>
    <select class="form-select dd dark" aria-label="Output window"><option>main out</option></select>
    <select class="form-select dd dark p-0" aria-label="Output path"><option>Anlg12S/PDIFLR</option></select>
    <button class="dark-btn d-block">SAFE</button>
  </div>
  <div class="text-center text-white fw-bold" style="height:18px;line-height:17px;background:#444142">AUTO</div>
  <div class="px-1"><select class="form-select dd" style="color:#237a23" aria-label="Automation mode"><option>auto read</option></select></div>
  <div class="d-flex" style="padding:20px 6px 0 12px;height:158px">
    <div class="vslide v-master"><input type="range" min="0" max="100" value="82" aria-label="Master volume"></div>
    <div class="sc" style="width:11px;height:132px" id="sc1"></div>
    <div class="meter ms-1" style="height:130px;padding:1px"><i><b style="height:46%"></b></i><i><b style="height:46%"></b></i></div>
    <div class="sc ms-auto" style="width:11px;height:126px" id="sc2"></div>
  </div>
  <div class="vol justify-content-center mx-2" style="height:14px;line-height:14px;margin-top:7px">0.0</div>
  <div class="mt-auto" style="height:11px;background:#470b18"></div>
</section>

<section class="win plugin" aria-label="L1 limiter plug-in">
  <div class="plug-title"><button aria-label="Close"></button></div>
  <div class="plug-head d-flex"><div style="width:119px;padding-left:7px">Track</div><div class="d-flex align-items-center" style="width:109px;padding-left:7px">Preset<svg class="ms-auto me-1" width="9" height="9" viewBox="0 0 9 9"><circle cx="4.500" cy="4.500" r="4" fill="#aaa"/><path d="M2 3h5L4.500 6z" fill="#222"/></svg></div><div class="ps-2" style="width:38px">Auto</div></div>
  <div class="plug-ctl d-flex">
    <div style="width:119px" class="ps-1 pe-1"><div class="d-flex gap-1 ps-1" style="margin-bottom:2px"><select class="form-select dd dark m-0" aria-label="Track"><option>DR Loop 1</option></select><select class="form-select dd dark m-0" style="width:20px" aria-label="Insert"><option>b</option></select></div><div class="ps-1"><select class="form-select dd dark" aria-label="Plug-in"><option>L1 limiter</option></select></div></div>
    <div style="width:109px" class="ps-1 pe-1"><select class="form-select dd dark" aria-label="Preset"><option>&lt;factory default&gt;</option></select><div class="d-flex justify-content-between px-1"><button class="flat">-</button><button class="flat">+</button><button class="flat" aria-label="Copy"><svg width="9" height="8" viewBox="0 0 9 8"><path d="M.5.500h6v4h-6zM3.500 3.500h5v4h-5z" fill="#444" stroke="#eee"/></svg></button><button class="flat" style="font-size:8px">COMPARE</button></div></div>
    <div style="width:38px" class="px-1"><button class="dark-btn w-100 d-grid" style="height:14px;place-items:center;background:#777;margin-bottom:2px" aria-label="Auto enable"><svg width="9" height="8" viewBox="0 0 9 8"><path d="M.5.500h6v4h-6zM3.500 3.500h5v4h-5z" fill="#777" stroke="#eee"/></svg></button><button class="flat d-block mx-auto" style="font-size:8px">SAFE</button></div>
    <div class="text-center border-0" style="width:55px"><button class="dark-btn" style="height:14px;margin-bottom:2px;font-size:8px">BYPASS</button><b class="d-block text-white" style="font-size:8px">Native</b></div>
    <div class="ms-auto border-0 pe-1"><button class="target" aria-label="Target"><svg width="7" height="7" viewBox="0 0 7 7"><path d="M.5.500h6v6h-6zM3 3h1v1H3z" fill="none" stroke="#fcd"/></svg></button></div>
  </div>
  <div class="l1">
    <div class="l1-bar d-flex"><svg width="22" height="13" viewBox="0 0 22 13"><path d="M4 2l2 7 2-7 3 9 2-9 2 7 2-7M6 4v8M11 3v8M15 4v8" fill="none" stroke="#eee"/></svg>
      <button style="width:28px" aria-label="Undo"><svg width="13" height="8" viewBox="0 0 13 8"><path d="M2 5q5-5 9-2 1 3-3 4M2 1v4h4" fill="none" stroke="#ddd" stroke-width="1.500"/></svg></button><button style="width:28px" aria-label="Redo"><svg width="13" height="8" viewBox="0 0 13 8"><path d="M11 5Q6 0 2 3 1 6 5 7M11 1v4H7" fill="none" stroke="#555"/></svg></button><button style="width:28px" aria-label="Previous"><svg width="10" height="8" viewBox="0 0 10 8"><path d="M0 4l4-4v3h6v2H4v3z" fill="#eee"/></svg></button><button style="width:28px" aria-label="Next"><svg width="10" height="8" viewBox="0 0 10 8"><path d="m10 4-4-4v3H0v2h6v3z" fill="#eee"/></svg></button><button style="width:33px">A→B</button><button style="width:33px">Load</button><button style="width:33px">Save</button><button class="fw-bold" style="width:13px">?</button></div>
    <div class="l1-setup">Setup A*</div>
    <div class="l1-face d-flex">
      <div class="grp"><div class="grp-t d-flex justify-content-between"><span>⌐</span>Threshold<span>¬</span></div>
        <div class="d-flex position-relative"><div class="lv"><i style="height:87%"></i></div><div class="scale" data-scale="0,6,&nbsp;,18,24,30"></div><div class="lv"><i style="height:78%"></i></div><input class="hid" type="range" aria-label="Threshold"><output class="grip" style="top:69px">-13.1</output></div>
        <div class="ro-row d-flex justify-content-between"><output class="ro">-2.9</output><output class="ro">-4.5</output></div></div>
      <div class="text-center" style="width:20px;padding-top:86px;margin-right:3px">Link<button class="d-grid mx-auto" style="width:19px;height:15px;background:#333;border:1px solid #111;border-radius:2px;place-items:center" aria-label="Link"><svg width="9" height="7" viewBox="0 0 9 7"><path d="M4 0v7L0 3.500zM5 0v7l4-3.500z" fill="#fff"/></svg></button></div>
      <div class="grp"><div class="grp-t d-flex justify-content-between"><span>⌐</span>Out Ceiling<span>¬</span></div>
        <div class="d-flex position-relative"><div class="lv"><i style="height:85%"></i></div><div class="scale" data-scale="0,&nbsp;,12,18,24,30"></div><div class="lv"><i style="height:85%"></i></div><input class="hid" type="range" aria-label="Out ceiling"><output class="grip sel" style="top:20px">-4.4</output></div>
        <div class="ro-row d-flex justify-content-between"><output class="ro">-3.2</output><output class="ro">-4.4</output></div></div>
      <div style="width:46px"><div class="grp-t text-end">Release</div><div class="d-flex justify-content-end"><div class="text-end pe-1 flex-shrink-0" style="width:24px;height:178px;line-height:8px;padding-top:8px"><div style="height:92px">1000</div><div style="height:63px">1.0</div><div>0.01</div></div><div class="vslide v-rel me-2"><input type="range" min="0" max="100" value="38" aria-label="Release"></div></div><output class="ro ro-row ms-auto" style="width:32px">1.00</output></div>
      <div style="width:39px"><div class="grp-t text-end">Atten</div><div class="d-flex"><div class="scale" data-scale="0,6,12,18,24,30" data-one="1"></div><div class="lv me-1" style="align-items:flex-start"><i style="height:5px;background:#e31515"></i></div></div><output class="ro ro-row ms-auto">-10.2</output></div>
    </div>
    <div class="l1-foot">L1 Limiter</div>
  </div>
</section>

<script src="https://cdn.jsdelivr.net/npm/bootstrap@5.3.0/dist/js/bootstrap.bundle.min.js"></script>
<script>
const $ = id => document.getElementById(id);
const SPAN = 903, BAR = 24.75;            // visible timeline width and one bar, in timeline units
const pct = v => (v / SPAN * 100).toFixed(3) + '%';

// rulers
for (let b = 1; b <= 37; b += 2) $('bars').innerHTML += `<span style="left:${pct((b - 1) * BAR)}">${b}</span>`;
for (let s = 0; s <= 90; s += 5) $('secs').innerHTML += `<span style="left:${pct(s * 93 / 240 * BAR)}">${Math.floor(s / 60)}:${String(s % 60).padStart(2, '0')}</span>`;
$('bars').innerHTML += `<svg style="position:absolute;left:${pct(217)};top:2px" width="6" height="12" viewBox="0 0 6 12"><path d="M5 0v12L0 7h3V0z" fill="#6fa0ec"/></svg><svg style="position:absolute;left:${pct(322)};top:2px" width="6" height="12" viewBox="0 0 6 12"><path d="M1 0v12l5-5H3V0z" fill="#6fa0ec"/></svg>`;

// session overview: x, y, length, colour
const lines = [[0,3,8,'#153d2b'],[0,7,16,'#5f1414'],[18,7,16,'#5f1414'],[18,9,16,'#222'],[42,7,9,'#5f1414'],[58,7,34,'#5f1414'],[43,9,49,'#222'],[34,15,7,'#2b1768'],[38,18,4,'#2b1768'],[18,20,167,'#1c2a4a'],[75,23,121,'#222'],[42,25,15,'#35148a'],[75,25,18,'#35148a'],[168,25,57,'#35148a'],[92,17,16,'#2b1768'],[108,7,16,'#5f1414'],[108,9,16,'#222'],[126,7,25,'#5f1414'],[126,9,25,'#222'],[152,7,32,'#5f1414'],[152,9,32,'#222'],[126,2,19,'#1b3c3c'],[152,2,22,'#1b3c3c'],[184,4,28,'#244f20'],[197,2,5,'#222'],[215,2,15,'#222'],[243,7,5,'#5f1414'],[250,7,32,'#5f1414'],[250,4,44,'#244f20'],[283,9,32,'#222'],[283,11,32,'#27304f'],[243,20,72,'#1c2a4a'],[250,23,66,'#222'],[290,2,20,'#222'],[333,2,22,'#1b2c33'],[433,2,34,'#1b2c33'],[470,2,220,'#1b2c33'],[397,7,17,'#5f1414'],[846,7,325,'#4a1013']];
$('universe').innerHTML = '<rect width="73" height="23" y=".5" fill="#9b9b9b" stroke="#fff"/>' + lines.map(([x, y, w, c]) => `<path d="M${x} ${y}h${w}" stroke="${c}" stroke-width="2"/>`).join('') + '<path d="M242-5h6l-3 4zM312-5h6l-3 4z" fill="#f5df3a"/>';

// track list
const names = 'BAS1|VI1B1|Drms1|Inst 1|Altair|Altair1|Inst 2|Altrd1|Seq1|Seq2|Altrd2|Elmn2|Inst21|Inst 3|3rdPd|Pad3|Inst 4|guitr2|Guitr3|HDlyK|KrstRv|SqDly|FXEfc|Sbmst|Inst41|gtr2d1|VI2B2'.split('|');
const kindOf = (n, i) => /Inst|VI/.test(n) ? 'inst' : i >= 19 && i <= 23 ? 'aux' : [5, 8, 9, 11, 15, 18].includes(i) ? 'audio' : 'midi';
const icons = {
  inst: ['#8a5513', '<path fill="#9c5a1a" d="M0 0h9v9H0z"/><path d="M2.500 0v6M4.500 0v6M6.500 0v6" stroke="#2c1705"/>'],
  aux: ['#1d5c1d', '<path d="M3 0h3v4h3L4.500 9 0 4h3z" fill="#3a9a3a"/>'],
  audio: ['#1d3c70', '<path d="M0 4.500h9M2 1v7M4 2v5M6 3v3" stroke="#333" stroke-width="1.400"/>'],
  midi: ['#2a0f7a', '<circle cx="4.500" cy="4.500" r="3.800" fill="#aab" stroke="#444"/><path d="M2 4.500h5M4.500 2v5" stroke="#444"/>']
};
let li = '';
for (let i = 0; i < 18; i++) li += `<li><i class="dot${i === 2 ? ' off' : ''}"></i></li>`;
names.forEach((n, i) => { const k = kindOf(n, i), on = k === 'audio' || k === 'aux';
  li += `<li><i class="dot${on ? '' : ' off'}"></i><i class="chip" style="background:${icons[k][0]}"></i><svg class="li-ic" viewBox="0 0 9 9">${icons[k][1]}</svg><span class="${k === 'inst' ? 'fst-italic' : ''}">${n}</span></li>`; });
$('trackList').innerHTML = li;

// waveforms
let seed = 7; const rnd = () => (seed = (seed * 16807) % 2147483647) / 2147483647;
function wave(w, cy, amp, env) {
  let up = '', dn = '';
  for (let x = 0; x <= w; x += 1) { const a = Math.max(.5, amp * env(x, w) * (.4 + .6 * rnd())); up += `L${x} ${(cy - a).toFixed(1)}`; dn = `L${x} ${(cy + a * (.75 + .25 * rnd())).toFixed(1)}` + dn; }
  return `<path d="M0 ${cy}${up}${dn}Z"/>`;
}
const envs = {
  vox: x => .4 + .6 * Math.abs(Math.sin(x / 7)) * Math.abs(Math.cos(x / 17)),
  swell: (x, w) => Math.sin(Math.PI * x / w),
  beat: x => { const p = (x + 1) % 25; return p < 2 || (p > 2.5 && p < 5) ? 1 : p < 9 ? .5 : .22; },
  tombs: x => .5 + .5 * Math.pow(Math.abs(Math.sin(x / 3)), 2),
  dense: () => 1,
  bass: x => .62 + .38 * Math.pow(1 - (x % 12) / 12, 1) * Math.abs(Math.cos(x / 31)) + .1 * Math.sin(x / 5)
};
const palette = { vox:['#9be1f7','#143e4c'], grn:['#a8f585','#1d5312'], swell:['#a8f585','#1d5312'], beat:['#f19ba6','#4d0612'], tombs:['#f19ba6','#4d0612'], tsel:['#c77283','#33232b'], inst:['#9be1f7','#194451'], pur:['#9477e0','#281052'], mag:['#d57ae0','#3b1147'], blue:['#98bbf6','#152b50'], flat:['#98bbf6','#152b50'], gray:['#cfc6c8','#3c3a3c'], red:['#d77989','#350713'] };
function clip([x0, x1, name, kind, db]) {
  const w = x1 - x0, colors = palette[kind];
  let s = '';
  const gap = x => x0 + x > 833 && x0 + x < 879 ? .01 : kind === 'red' && x < 24 ? .01 : envs.bass(x);
  if (kind === 'vox') s = wave(w, 26, 5, envs.vox);
  if (kind === 'grn') s = wave(w, 26, 4, envs.vox);
  if (kind === 'swell') s = wave(w, 26, 8, envs.swell);
  if (kind === 'beat') s = wave(w, 12, 14, envs.beat) + wave(w, 38, 11, envs.beat) + `<path d="M0 0h${w}v11H0z"/>`;
  if (kind === 'tombs') s = wave(w, 14, 12, envs.tombs) + wave(w, 39, 11, envs.tombs) + `<path d="M0 0h${w}v12H0z"/>`;
  if (kind === 'tsel') s = wave(w, 24, 14, envs.dense) + `<path d="M0 0h${w}v12H0zM0 48h${w}v4H0z"/>`;
  if (kind === 'inst') s = `<path d="M0 17h${w}v13H0z"/>`;
  if (kind === 'pur') s = wave(w, 8, 17, envs.tombs) + wave(w, 44, 10, envs.tombs);
  if (kind === 'mag') s = wave(w, 12, 5, envs.tombs) + wave(w, 39, 5, envs.tombs) + `<path d="M0 0h${w}v12H0zM0 39h${w}v12H0z" opacity=".6"/>`;
  if (kind === 'flat') s = `<path d="M0 38h${w}v1H0z"/>`;
  if (['blue', 'gray', 'red'].includes(kind)) s = wave(w, 13, 7, gap) + wave(w, 38, 7, gap);
  return `<div class="clip" style="left:${pct(x0 - 361)};width:${pct(w)};background:${colors[0]}"><svg viewBox="0 0 ${w} 51" preserveAspectRatio="none" fill="${colors[1]}">${s}</svg>${name ? `<span class="clip-nm">${name}</span>` : ''}${db ? `<span class="clip-db d-flex align-items-center"><svg style="width:8px;height:9px;margin-right:3px" viewBox="0 0 8 9"><path d="M4 0v9M2 3h4v2H2z" stroke="#fff" fill="none"/></svg>${db}</span>` : ''}</div>`;
}
const inst = [583, 633, 1028, 1078, 1127, 1177, 1227].map(x => [x, x + 50, 'Inst 5-02', 'inst']);
const tracks = [
  {n:'Kristy 1', t:'c', ins:['JJP-Vocals','Vocal Rider'], inp:'Analog 1', clips:[[376,443,'Kristy 2_09-02','vox','0 dB'],[445,469,'Kris','vox'],[577,582,'','vox'],[1072,1078,'','vox']]},
  {n:'Kristy 2', t:'c', mute:'mute-on', pk:1, ins:['JJP-Vocals','Vocal Rider'], inp:'Analog 2', clips:[[457,495,'Kristy 1','swell','-4.3'],[580,644,'Kristy 1_01-0','grn','-7.8 dB']]},
  {n:'DR Loop 1', t:'c', solo:1, mute:' ', lv:76, ins:['Q1','L1 limiter'], lit:1, inp:'Analog 1-2', vol:'-0.9', clips:[[361,460,'090DANKD-SPnT_01-','beat','0 dB'],[460,558,'090DANKD-SPnT_01-','beat','0 dB'],[583,683,'090TOMBS-SPnT','tsel','0 dB'],[1060,1066,'','tombs'],[1079,1178,'090TOMBS-SPnT_01-','tombs','0 dB'],[1178,1252,'090TOMBS-SPn','tombs','0 dB']]},
  {n:'Inst 5', amber:1, lv:79, ins:['Transfuser'], inp:'no input', clips:inst},
  {n:'GroveLoped', ins:['C6'], inp:'no input', clips:[]},
  {n:'DR Loop 2', ins:['C6'], inp:'no input', clips:[[1066,1079,'D','pur'],[1251,1270,'D','pur']]},
  {n:'DR Loop 3', last:1, ins:['C6'], inp:'no input', clips:[[831,868,'Rhode_','mag','0 dB']]},
  {n:'Bass1', lv:68, ins:['Q10','Bass Rider'], inp:'Bus 3-4', clips:[[564,576,'E','flat'],[583,1275,'Bass1_02','blue','0 dB']]},
  {n:'Bass2', lv:60, ins:['Q10','Bass Rider'], inp:'Bus 5-6', clips:[[361,558,'Bass2_01-01','gray','0 dB'],[558,1275,'Bass2_01-02','red','0 dB']]}
];
const circ = '<svg class="mx-auto" width="9" height="9" viewBox="0 0 9 9"><circle cx="4.500" cy="4.500" r="4" fill="#7388a8"/><path d="M2 4h5L4.500 6.500z" fill="#17335f"/></svg>';
$('tracks').innerHTML = tracks.map(t => {
  const bar = t.lv ? `<b style="height:${t.lv}%;background:linear-gradient(#f4f23b 32%,#4aff34 32%)"></b>` : t.pk ? '<b style="height:64%;background:linear-gradient(#f4f23b 2px,#28520f 2px)"></b>' : '';
  const slot = i => t.ins[i] ? `<button class="slot full${t.lit && i === 1 ? ' lit' : ''}"><span>${t.ins[i]}</span></button>` : `<button class="slot empty" aria-label="Empty insert"><span></span></button>`;
  return `<div class="trk d-flex${t.amber ? ' amber' : ''}">
  <div class="strip d-flex flex-column justify-content-between flex-shrink-0">${circ}<svg class="mx-auto mb-1" width="6" height="6" viewBox="0 0 6 6"><path d="M0 0v6l6-3z" fill="#8fb0df"/></svg></div>
  <div class="panel flex-shrink-0"><div class="nm d-flex"><span>${t.n}</span><svg class="mx-auto mt-1" width="6" height="4" viewBox="0 0 6 4"><path d="M0 0h6L3 4z" fill="#555"/></svg></div>
   <div class="row-b"><button class="sq rec" aria-label="Record ${t.n}"></button>${t.amber ? '<span class="sq none"></span>' : '<button class="sq">I</button>'}<button class="sq${t.solo ? ' solo-on' : ''}">S</button><button class="sq ${t.mute || 'mute'}">M</button></div>
   <div class="row-c"><button class="tiny" style="width:10px" aria-label="Timebase">${t.t ? '<svg class="mx-auto" width="8" height="8" viewBox="0 0 8 8"><circle cx="4" cy="4" r="3" fill="#cdf" stroke="#33a"/><path d="M4 2v2h1" stroke="#33a" fill="none"/></svg>' : '<svg class="mx-auto" width="8" height="10" viewBox="0 0 8 10"><path d="M3 0h2l2 10H1z" fill="#2bd04a" stroke="#174"/></svg>'}</button><button class="tiny" style="width:20px">${t.amber ? 'clps' : 'wave'}</button>${t.amber ? '<button class="tiny" style="width:18px">p</button>' : ''}<button class="tiny rd">read</button>${t.amber ? '' : `<svg class="mt-1" width="8" height="8" viewBox="0 0 8 8"><path d="M4 0v7M1 7h6" stroke="#444"/></svg>`}${t.last ? '<i class="tiny" style="width:9px;background:#57e05a;border:2px solid #eee"></i>' : ''}</div></div>
  <div class="meter flex-shrink-0"><i>${bar}</i><i>${bar}</i></div>
  <div class="ins flex-shrink-0">${slot(0)}${slot(1)}${slot(2)}</div>
  <div class="io flex-shrink-0"><select class="form-select dd${/Analog/.test(t.inp) ? ' off' : ''}" aria-label="${t.n} input"><option>${t.inp}</option></select><select class="form-select dd subm" aria-label="${t.n} output"><option>Submaster</option></select><div class="vol"><span>${t.vol || '0.0'}</span><span>P</span><span>P</span></div></div>
  ${t.amber ? '<div class="keys flex-shrink-0">4</div>' : '<div class="vruler flex-shrink-0"></div>'}
  <div class="lane grid-bg">${t.clips.map(clip).join('')}</div></div>`;
}).join('');

// activity meters
$('activity').innerHTML = [['CPU (Native)',30,'#ffd91c'],['CPU (Clip)',0,''],['Disk',0,''],['Disk Cache',8,'#ffd91c'],['Timeline Cached',100,'#5bf718']].map(([n, v, c], i) => `<div class="d-flex align-items-center"><span class="text-end" style="width:103px">${n}</span><div class="progress mx-2"><div class="progress-bar" style="width:${v}%;background:${c}"></div>${i ? '' : '<i style="width:1px;margin-left:9px;background:#ffd91c"></i>'}</div><span>${v}%</span></div>`).join('');
$('sc1').innerHTML = ['12','6','0','-5','-10','-15','-20','-30','-40','-60','-90'].map(v => `<span>${v}</span>`).join('');
$('sc2').innerHTML = ['0','-3','-6','-10','-16','-22','-32','-60'].map(v => `<span>${v}</span>`).join('');

// plug-in scales
document.querySelectorAll('.scale').forEach(el => {
  let d = ''; const one = el.dataset.one;
  for (let i = 0; i <= 50; i++) { const y = 2 + i * 3.48, l = i % 10 ? 5 : 7; d += one ? `M${20 - l} ${y}h${l}` : `M2 ${y}h${l}M${32 - l} ${y}h${l}`; }
  el.innerHTML = `<svg viewBox="0 0 ${one ? 21 : 34} 178" preserveAspectRatio="none"><path d="${d}" stroke="#666" stroke-width=".7"/></svg><div class="nums${one ? ' text-start' : ''}">${el.dataset.scale.split(',').map(v => `<span>${v}</span>`).join('')}</div>`;
});
</script>
</body>
</html>
